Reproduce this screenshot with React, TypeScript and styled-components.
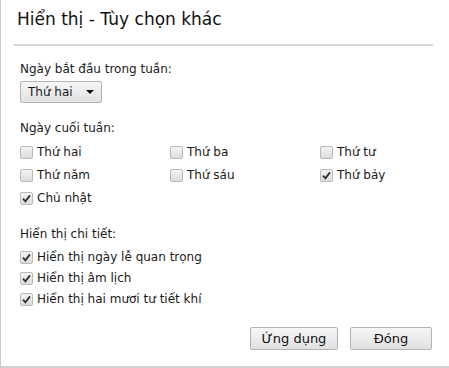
import React from 'react'
import styled, { createGlobalStyle } from 'styled-components'

const GlobalStyle = createGlobalStyle`
  html, body {
    margin: 0;
    padding: 0;
    background: #ffffff;
  }
  body {
    font-family: Tahoma, "DejaVu Sans", Verdana, sans-serif;
    color: #1a1a1a;
  }
`

const weekdays = [
  { label: 'Thứ hai', checked: false },
  { label: 'Thứ ba', checked: false },
  { label: 'Thứ tư', checked: false },
  { label: 'Thứ năm', checked: false },
  { label: 'Thứ sáu', checked: false },
  { label: 'Thứ bảy', checked: true },
  { label: 'Chủ nhật', checked: true },
]

const details = [
  'Hiển thị ngày lễ quan trọng',
  'Hiển thị âm lịch',
  'Hiển thị hai mươi tư tiết khí',
]

function Check({ checked, label }: { checked: boolean; label: string }) {
  return (
    <CheckRow>
      <Box>
        {checked && (
          <svg width="9" height="9" viewBox="0 0 9 9">
            <path d="M1 4.6 L3.4 7.3 L8 1.4" fill="none" stroke="#333" strokeWidth="1.9" />
          </svg>
        )}
      </Box>
      <span>{label}</span>
    </CheckRow>
  )
}

export default function App() {
  return (
    <>
      <GlobalStyle />
      <Dialog>
        <Title>Hiển thị - Tùy chọn khác</Title>
        <Divider />
        <Body>
          <Section>
            <Label>Ngày bắt đầu trong tuần:</Label>
            <Select>
              <span>Thứ hai</span>
              <Arrow />
            </Select>
          </Section>
          <Section>
            <Label $gap={8}>Ngày cuối tuần:</Label>
            <Grid>
              {weekdays.map(d => (
                <Check key={d.label} checked={d.checked} label={d.label} />
              ))}
            </Grid>
          </Section>
          <Section $top={20}>
            <Label $gap={7}>Hiển thị chi tiết:</Label>
            <List>
              {details.map(d => (
                <Check key={d} checked label={d} />
              ))}
            </List>
          </Section>
        </Body>
        <Footer>
          <Button $w={88}>Ứng dụng</Button>
          <Button $w={82}>Đóng</Button>
        </Footer>
      </Dialog>
    </>
  )
}

const Dialog = styled.div`
  box-sizing: border-box;
  width: 449px;
  height: 368px;
  border-left: 1px solid #cccccc;
  border-bottom: 2px solid #d0d0d0;
  display: flex;
  flex-direction: column;
`

const Title = styled.h1`
  margin: 0;
  padding: 9px 0 0 16px;
  height: 35px;
  font-size: 17px;
  font-weight: normal;
  color: #111;
`

const Divider = styled.div`
  margin: 0 16px 0 13px;
  height: 2px;
  background: #d6d6d6;
`

const Body = styled.div`
  padding: 15px 0 0 19px;
  display: flex;
  flex-direction: column;
  font-size: 12px;
`

const Section = styled.div<{ $top?: number }>`
  display: flex;
  flex-direction: column;
  margin-top: ${p => p.$top ?? 17}px;

  &:first-child {
    margin-top: 0;
  }
`

const Label = styled.div<{ $gap?: number }>`
  height: 16px;
  line-height: 16px;
  margin-bottom: ${p => p.$gap ?? 5}px;
`

const Select = styled.div`
  box-sizing: border-box;
  width: 82px;
  height: 22px;
  margin-top: -1px;
  display: flex;
  align-items: center;
  justify-content: space-between;
  padding: 0 7px 0 7px;
  border: 1px solid #b4b4b4;
  border-radius: 2px;
  background: linear-gradient(#f6f6f6, #e2e2e2);
`

const Arrow = styled.span`
  width: 0;
  height: 0;
  border-left: 4px solid transparent;
  border-right: 4px solid transparent;
  border-top: 4px solid #111;
`

const Grid = styled.div`
  display: grid;
  grid-template-columns: 150px 150px 1fr;
  row-gap: 7px;
`

const List = styled.div`
  display: flex;
  flex-direction: column;
  gap: 5px;
`

const CheckRow = styled.label`
  display: flex;
  align-items: center;
  gap: 4px;
  height: 16px;
`

const Box = styled.span`
  box-sizing: border-box;
  width: 13px;
  height: 13px;
  border: 1px solid #b9b9b9;
  border-radius: 2px;
  background: linear-gradient(#f4f4f4, #dcdcdc);
  display: flex;
  align-items: center;
  justify-content: center;
`

const Footer = styled.div`
  margin-top: auto;
  display: flex;
  justify-content: flex-end;
  gap: 12px;
  padding: 0 17px 16px 0;
`

const Button = styled.button<{ $w: number }>`
  box-sizing: border-box;
  width: ${p => p.$w}px;
  height: 23px;
  padding: 0;
  font-family: inherit;
  font-size: 13px;
  color: #111;
  border: 1px solid #b4b4b4;
  border-radius: 2px;
  background: linear-gradient(#f7f7f7, #e0e0e0);
`
